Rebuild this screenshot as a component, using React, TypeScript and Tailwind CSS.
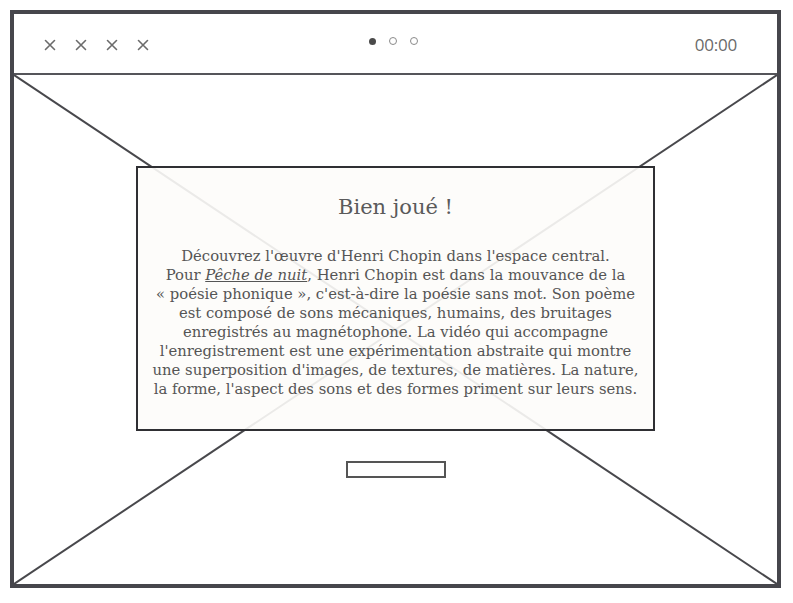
import React from 'react';

function Cross() {
  return (
    <svg width="12" height="12" viewBox="0 0 12 12" className="block">
      <path d="M1.5 1.5 L10.5 10.5 M10.5 1.5 L1.5 10.5" stroke="#6b6b6b" strokeWidth="1.6" strokeLinecap="round" />
    </svg>
  );
}

export default function App() {
  return (
    <div className="h-[603px] w-[793px] bg-white p-[10px]">
      <div className="flex h-[578px] w-[771px] flex-col border-4 border-[#46464c] bg-white">
        {/* top bar */}
        <div className="relative flex h-[61px] shrink-0 items-center justify-between border-b-2 border-[#55555a] pl-[30px] pr-[40px] pb-[4px]">
          <div className="flex items-center gap-[19px] pt-[6px]">
            <Cross />
            <Cross />
            <Cross />
            <Cross />
          </div>
          <div className="absolute left-[355px] top-[23px] flex items-center gap-[13px]">
            <span className="block h-[7px] w-[7px] rounded-full bg-[#4a4a4a]" />
            <span className="block h-[8px] w-[8px] rounded-full border-[1.5px] border-[#8a8a8a]" />
            <span className="block h-[8px] w-[8px] rounded-full border-[1.5px] border-[#8a8a8a]" />
          </div>
          <span className="pt-[6px] font-['Open_Sans',sans-serif] text-[17px] tracking-[-0.2px] text-[#6a6a6a]">00:00</span>
        </div>

        {/* content */}
        <div className="relative flex-1">
          <svg className="absolute inset-0 h-full w-full" preserveAspectRatio="none" viewBox="0 0 763 509">
            <line x1="0" y1="0" x2="763" y2="509" stroke="#48484c" strokeWidth="2" />
            <line x1="763" y1="0" x2="0" y2="509" stroke="#48484c" strokeWidth="2" />
          </svg>
          <div className="relative flex flex-col items-center pt-[91px]">
            <div className="flex h-[265px] w-[519px] flex-col items-center border-2 border-[#2f2f33] bg-[#fdfcfa]/90 pt-[24px]">
              <h1 className="font-['DejaVu_Serif',serif] text-[21px] font-light text-[#5a5a5a]">Bien joué !</h1>
              <p className="mt-[22px] px-[4px] text-center font-['DejaVu_Serif',serif] text-[14.8px] leading-[19px] text-[#555]">
                Découvrez l'œuvre d'Henri Chopin dans l'espace central.
                <br />
                Pour <em className="underline">Pêche de nuit</em>, Henri Chopin est dans la mouvance de la
                <br />
                « poésie phonique », c'est-à-dire la poésie sans mot. Son poème
                <br />
                est composé de sons mécaniques, humains, des bruitages
                <br />
                enregistrés au magnétophone. La vidéo qui accompagne
                <br />
                l'enregistrement est une expérimentation abstraite qui montre
                <br />
                une superposition d'images, de textures, de matières. La nature,
                <br />
                la forme, l'aspect des sons et des formes priment sur leurs sens.
              </p>
            </div>
            <div className="mt-[30px] h-[17px] w-[100px] border-2 border-[#555] bg-white" />
          </div>
        </div>
      </div>
    </div>
  );
}
